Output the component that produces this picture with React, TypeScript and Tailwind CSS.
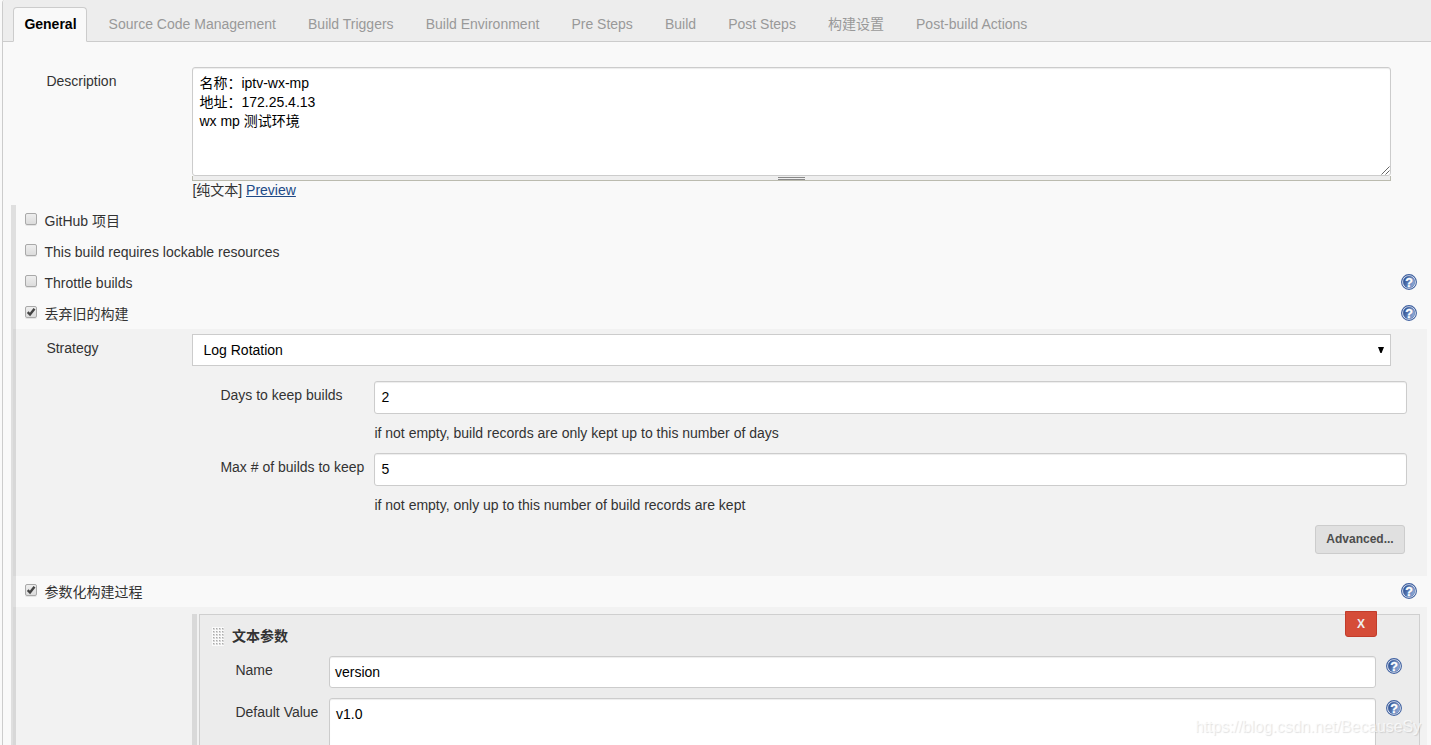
import type { ReactNode } from 'react'
import clsx from 'clsx'

const tabs = [
  'General',
  'Source Code Management',
  'Build Triggers',
  'Build Environment',
  'Pre Steps',
  'Build',
  'Post Steps',
  '构建设置',
  'Post-build Actions',
]

const description = '名称：iptv-wx-mp\n地址：172.25.4.13\nwx mp 测试环境'

function HelpIcon() {
  return (
    <svg viewBox="0 0 16 16" className="block h-4 w-4 shrink-0">
      <defs>
        <linearGradient id="help-fill" x1="0" y1="0" x2="1" y2="0.4">
          <stop offset="0" stopColor="#1f4388" />
          <stop offset="1" stopColor="#8aa6d4" />
        </linearGradient>
      </defs>
      <circle cx="8" cy="8" r="7.4" fill="#fff" stroke="#3f60a0" strokeWidth="1.1" />
      <circle cx="8" cy="8" r="5.9" fill="url(#help-fill)" stroke="#3f60a0" strokeWidth="0.5" />
      <text
        x="8"
        y="12.5"
        textAnchor="middle"
        fill="#fff"
        stroke="#fff"
        strokeWidth="0.3"
        className="font-['Liberation_Sans',sans-serif] text-[12.5px] font-bold"
      >
        ?
      </text>
    </svg>
  )
}

function Checkbox({ checked }: { checked?: boolean }) {
  return (
    <span className="h-3 w-3 shrink-0 rounded-[2px] border border-[#a9a9a9] bg-linear-to-b from-[#eeeeee] to-[#dcdcdc] shadow-[0_1px_0_#e4e4e4]">
      {checked && (
        <svg viewBox="0 0 10 10" className="block h-2.5 w-2.5">
          <path d="M1.7 5.2 L4 7.5 L8.5 1.7" fill="none" stroke="#444" strokeWidth="2.4" />
        </svg>
      )}
    </span>
  )
}

function OptionRow({ label, checked, help }: { label: string; checked?: boolean; help?: boolean }) {
  return (
    <div className="flex h-[31px] items-start pl-[9px] pr-[14px]">
      <div className="flex grow pt-2">
        <Checkbox checked={checked} />
        <span className="ml-[7.5px] leading-4">{label}</span>
      </div>
      {help && (
        <div className="pt-[7px]">
          <HelpIcon />
        </div>
      )}
    </div>
  )
}

function Field({ children, className }: { children: ReactNode; className?: string }) {
  return (
    <div
      className={clsx(
        'rounded-[3px] border border-[#cccccc] bg-white text-black shadow-[inset_0_1px_1px_rgba(0,0,0,0.075)]',
        className
      )}
    >
      {children}
    </div>
  )
}

function TabBar() {
  return (
    <div className="flex h-[42px] items-end gap-[10.1px] rounded-tl-[3px] border-b border-[#cccccc] bg-[#ededed] pl-2.5">
      {tabs.map((tab, index) => (
        <div
          key={tab}
          className={clsx(
            '-mb-px h-[35px] whitespace-nowrap border pl-[10.4px] pr-[9.6px] pt-2 leading-4',
            index === 0
              ? 'rounded-t border-[#cccccc] border-b-[#f9f9f9] bg-[#f9f9f9] font-bold text-black'
              : 'border-transparent text-[#999999]'
          )}
        >
          {tab}
        </div>
      ))}
    </div>
  )
}

function DescriptionSection() {
  return (
    <div className="flex h-[163px] pl-[43px] pt-[25px]">
      <div className="w-[146px] shrink-0 pl-[0.4px] pt-1.5 leading-4">Description</div>
      <div className="w-[1199px]">
        <div className="relative">
          <Field className="h-[109px] whitespace-pre-line pl-[6.4px] pt-1.5 leading-[19px]">{description}</Field>
          <svg viewBox="0 0 9 9" className="absolute bottom-px right-px h-[9px] w-[9px]">
            <path d="M0.5 8.5 L8.5 0.5 M4.5 8.5 L8.5 4.5" stroke="#555" strokeWidth="0.9" />
          </svg>
        </div>
        <div className="flex h-[5px] justify-center border border-t-0 border-[#bbbbaf] bg-[#eeeeee] pt-px">
          <div className="h-[3px] w-[27px] border-y border-[#888888]" />
        </div>
        <div className="pl-[0.4px] pt-px leading-4">
          [纯文本]{' '}
          <a className="text-[#204a87] underline" href="#preview">
            Preview
          </a>
        </div>
      </div>
    </div>
  )
}

function LogRotation() {
  const rows = [
    {
      label: 'Days to keep builds',
      value: '2',
      hint: 'if not empty, build records are only kept up to this number of days',
    },
    {
      label: 'Max # of builds to keep',
      value: '5',
      hint: 'if not empty, only up to this number of build records are kept',
    },
  ]

  return (
    <div className="-ml-[3px] mr-1 h-[247px] bg-black/[0.027] pl-[33px] pt-[5px]">
      <div className="flex">
        <div className="w-[146px] shrink-0 pl-[0.4px] pt-1.5 leading-4">Strategy</div>
        <div className="flex h-8 w-[1199px] items-center justify-between border border-[#cccccc] bg-white pl-[10.5px] pr-1.5 text-black">
          <span>Log Rotation</span>
          <svg viewBox="0 0 6 6" className="h-1.5 w-1.5">
            <path d="M0 0 H6 L3.6 6 H2.4 Z" fill="#000" />
          </svg>
        </div>
      </div>
      <div className="pl-[174px] pt-[15px]">
        {rows.map((row) => (
          <div key={row.label} className="flex h-[72px]">
            <div className="w-[154px] shrink-0 pl-[0.4px] pt-1.5 leading-4">{row.label}</div>
            <div>
              <Field className="h-[33px] w-[1033px] pl-[6.4px] leading-[31px]">{row.value}</Field>
              <div className="pl-[0.4px] pt-[11px] leading-4">{row.hint}</div>
            </div>
          </div>
        ))}
      </div>
      <div className="flex justify-end pr-[22px]">
        <button className="h-[29px] w-[90px] rounded-[3px] border border-[#cccccc] bg-[#e0e0e0] pb-0.5 text-xs font-bold text-[#4d4d4d]">
          Advanced...
        </button>
      </div>
    </div>
  )
}

function Parameters() {
  return (
    <div className="-ml-[3px] mr-1 flex h-[138px] bg-black/[0.027] pl-[179px] pr-[7px] pt-[7px]">
      <div className="mr-0.5 w-[5px] bg-[#d9d9d9]" />
      <div className="relative grow border border-b-0 border-[#cfcfcf] bg-[#ececec] pl-3 pt-3">
        <button className="absolute -top-1 right-[42px] h-[26px] w-8 rounded-b-[3px] border border-[#c13c2b] bg-[#d54c38] text-xs font-bold text-[#eeeeee]">
          X
        </button>
        <div className="flex h-[29px]">
          <div className="h-[19px] w-3 bg-[#fafafa] bg-[linear-gradient(#bbb,#bbb)] bg-size-[3px_3px] [mask:none]">
            <svg className="block h-[19px] w-3">
              <defs>
                <pattern id="grip" width="3" height="3" patternUnits="userSpaceOnUse">
                  <rect width="3" height="3" fill="#fafafa" />
                  <rect x="1" y="1" width="2" height="2" fill="#d6d6d6" />
                  <rect x="1" y="1" width="1" height="1" fill="#aaaaaa" />
                </pattern>
              </defs>
              <rect width="12" height="19" fill="url(#grip)" />
            </svg>
          </div>
          <div className="ml-2 pt-px font-bold leading-4">文本参数</div>
        </div>
        <div className="flex h-[42px] pl-[23px]">
          <div className="w-[94px] shrink-0 pl-[0.4px] pt-1.5 leading-4">Name</div>
          <Field className="h-8 w-[1047px] pl-[5px] leading-[30px]">version</Field>
          <div className="ml-2.5 pt-0.5">
            <HelpIcon />
          </div>
        </div>
        <div className="flex pl-[23px]">
          <div className="w-[94px] shrink-0 pl-[0.4px] pt-1.5 leading-4">Default Value</div>
          <Field className="h-[60px] w-[1047px] pl-1.5 pt-[7px] leading-4">v1.0</Field>
          <div className="ml-2.5 pt-0.5">
            <HelpIcon />
          </div>
        </div>
      </div>
    </div>
  )
}

export default function App() {
  return (
    <div className="relative h-[745px] w-[1431px] overflow-hidden bg-[#f9f9f9] pl-0.5 font-['Liberation_Sans','Noto_Sans_CJK_SC',sans-serif] text-sm text-[#333333]">
      <div className="h-full rounded-tl-[3px] border-l border-[#cccccc]">
        <TabBar />
        <DescriptionSection />
        <div className="ml-2 border-l-[5px] border-[#dfdfdf]">
          <OptionRow label="GitHub 项目" />
          <OptionRow label="This build requires lockable resources" />
          <OptionRow label="Throttle builds" help />
          <OptionRow label="丢弃旧的构建" checked help />
          <LogRotation />
          <OptionRow label="参数化构建过程" checked help />
          <Parameters />
        </div>
      </div>
      <div className="absolute bottom-2 right-2.5 text-base leading-5 tracking-[-0.08px] text-white/70 [text-shadow:1px_1px_1px_rgba(0,0,0,0.12)]">
        https://blog.csdn.net/BecauseSy
      </div>
    </div>
  )
}
